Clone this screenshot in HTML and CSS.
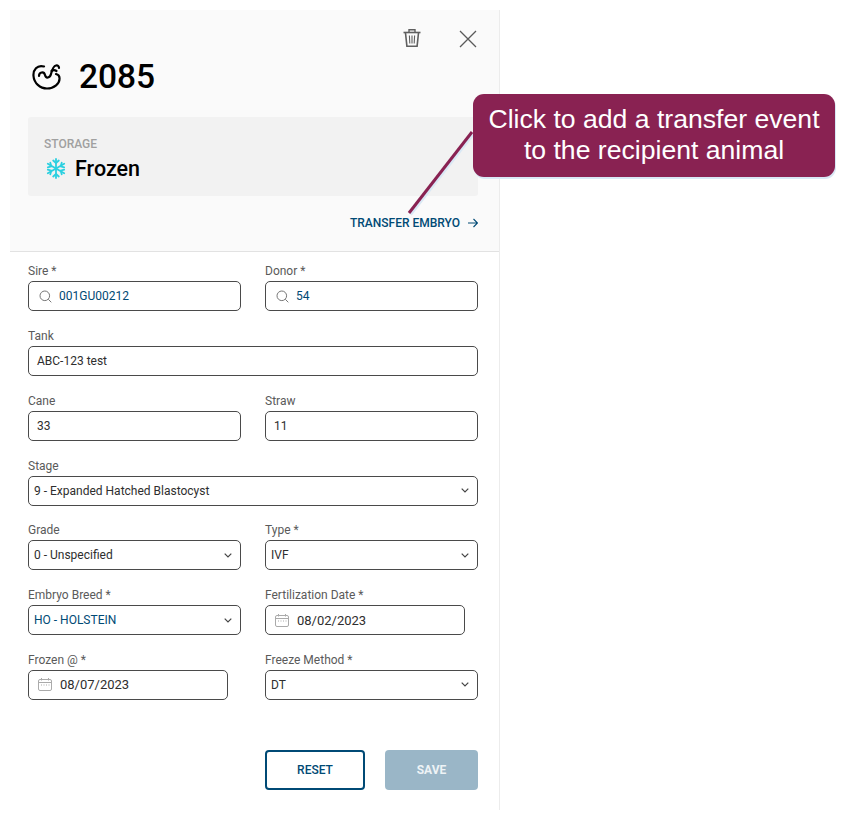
FILE: index.html
```html
<!DOCTYPE html>
<html lang="en">
<head>
    <meta charset="UTF-8">
    <meta name="viewport" content="width=device-width, initial-scale=1.0">
    <title>Embryo 2085</title>
    <link rel="stylesheet" href="styles.css">
</head>
<body>
    <div class="panel">
        <div class="panel-head">
            <div class="head-actions">
                <svg class="icon-trash" width="20" height="20" viewBox="0 0 20 20" fill="none" stroke="#5f5f5f">
                    <path d="M1.5 4.5h17" stroke-width="1.6"/>
                    <path d="M7 4V1.8h6V4" stroke-width="1.4"/>
                    <path d="M3.5 5l1.4 13.2h10.2L16.5 5" stroke-width="1.6"/>
                    <path d="M7.4 7.5l.4 8M10 7.5v8M12.6 7.5l-.4 8" stroke-width="1.1"/>
                </svg>
                <svg class="icon-close" width="18" height="18" viewBox="0 0 18 18" fill="none" stroke="#5a5a5a" stroke-width="1.3">
                    <path d="M1 1l16 16M17 1L1 17"/>
                </svg>
            </div>
            <div class="title-row">
                <svg class="icon-embryo" width="30" height="27" viewBox="0 0 30 27" fill="none" stroke="#000" stroke-width="2.2" stroke-linecap="round" stroke-linejoin="round">
                    <path d="M12 3.500C5 1.500 1 7 1.500 13 2 20 8 25.500 15 25.500c7 0 13-5 12.500-10.500 0-2-1.500-3.500-3.500-4"/>
                    <path d="M7 13c0-4 5-5 6-1 1 4 5 3 6-1 1-4 2-8 5-8.500 2-.3 3 1 3 2.500"/>
                    <path d="M19.500 8c1.500-1 3.500-1 5 0"/>
                </svg>
                <h1 class="title">2085</h1>
            </div>
            <div class="storage-card">
                <div class="storage-label">STORAGE</div>
                <div class="storage-value">
                    <svg class="icon-snow" width="20" height="21" viewBox="0 0 20 21" fill="none" stroke="#2bd0e0" stroke-width="1.8" stroke-linecap="round">
                        <path d="M10 1v19M1.800 5.750l16.400 9.500M18.200 5.750L1.800 15.250"/>
                        <path d="M7.200 2.500L10 5l2.800-2.500M7.200 18.500L10 16l2.800 2.500"/>
                        <path d="M1.800 9.300l3.500-1-1-3.600M15.700 16.300l-1-3.600 3.500-1"/>
                        <path d="M18.200 9.300l-3.500-1 1-3.600M4.300 16.300l1-3.600-3.500-1"/>
                    </svg>
                    <span>Frozen</span>
                </div>
            </div>
            <div class="transfer-row">
                <a class="transfer-link">TRANSFER EMBRYO</a>
                <svg width="10" height="10" viewBox="0 0 10 10" fill="none" stroke="#004a75" stroke-width="1.1">
                    <path d="M0 5h9.300M5.500 1l4 4-4 4"/>
                </svg>
            </div>
        </div>

        <div class="form">
            <div class="field">
                <label>Sire *</label>
                <div class="box with-icon">
                    <svg class="icon-search" width="13" height="13" viewBox="0 0 13 13" fill="none" stroke="#777" stroke-width="1"><circle cx="5.800" cy="5.800" r="4.800"/><path d="M9.300 9.300l3 3"/></svg>
                    <span class="val link">001GU00212</span>
                </div>
            </div>
            <div class="field">
                <label>Donor *</label>
                <div class="box with-icon">
                    <svg class="icon-search" width="13" height="13" viewBox="0 0 13 13" fill="none" stroke="#777" stroke-width="1"><circle cx="5.800" cy="5.800" r="4.800"/><path d="M9.300 9.300l3 3"/></svg>
                    <span class="val link">54</span>
                </div>
            </div>
            <div class="field wide">
                <label>Tank</label>
                <div class="box"><span class="val">ABC-123 test</span></div>
            </div>
            <div class="field">
                <label>Cane</label>
                <div class="box"><span class="val">33</span></div>
            </div>
            <div class="field">
                <label>Straw</label>
                <div class="box"><span class="val">11</span></div>
            </div>
            <div class="field wide">
                <label>Stage</label>
                <div class="box select"><span class="val">9 - Expanded Hatched Blastocyst</span><svg class="chev" width="8" height="5" viewBox="0 0 8 5" fill="none" stroke="#444" stroke-width="1.200"><path d="M.7.700L4 4 7.300.700"/></svg></div>
            </div>
            <div class="field">
                <label>Grade</label>
                <div class="box select"><span class="val">0 - Unspecified</span><svg class="chev" width="8" height="5" viewBox="0 0 8 5" fill="none" stroke="#444" stroke-width="1.200"><path d="M.7.700L4 4 7.300.700"/></svg></div>
            </div>
            <div class="field">
                <label>Type *</label>
                <div class="box select"><span class="val">IVF</span><svg class="chev" width="8" height="5" viewBox="0 0 8 5" fill="none" stroke="#444" stroke-width="1.200"><path d="M.7.700L4 4 7.300.700"/></svg></div>
            </div>
            <div class="field">
                <label>Embryo Breed *</label>
                <div class="box select"><span class="val link">HO - HOLSTEIN</span><svg class="chev" width="8" height="5" viewBox="0 0 8 5" fill="none" stroke="#444" stroke-width="1.200"><path d="M.7.700L4 4 7.300.700"/></svg></div>
            </div>
            <div class="field">
                <label>Fertilization Date *</label>
                <div class="box date">
                    <svg class="icon-cal" width="14" height="13" viewBox="0 0 14 13" fill="none" stroke="#aaa" stroke-width="1"><rect x=".5" y="1.500" width="13" height="11" rx="1.500"/><path d="M.5 4.500h13M3.500 0v2.500M10.500 0v2.500"/><path d="M3 7h1M5.500 7h1M8 7h1M10.500 7h1"/></svg>
                    <span class="val">08/02/2023</span>
                </div>
            </div>
            <div class="field">
                <label>Frozen @ *</label>
                <div class="box date">
                    <svg class="icon-cal" width="14" height="13" viewBox="0 0 14 13" fill="none" stroke="#aaa" stroke-width="1"><rect x=".5" y="1.500" width="13" height="11" rx="1.500"/><path d="M.5 4.500h13M3.500 0v2.500M10.500 0v2.500"/><path d="M3 7h1M5.500 7h1M8 7h1M10.500 7h1"/></svg>
                    <span class="val">08/07/2023</span>
                </div>
            </div>
            <div class="field">
                <label>Freeze Method *</label>
                <div class="box select"><span class="val">DT</span><svg class="chev" width="8" height="5" viewBox="0 0 8 5" fill="none" stroke="#444" stroke-width="1.200"><path d="M.7.700L4 4 7.300.700"/></svg></div>
            </div>
        </div>

        <div class="form-buttons">
            <button class="btn btn-reset">RESET</button>
            <button class="btn btn-save">SAVE</button>
        </div>
    </div>

    <!-- callout over the panel -->
    <svg class="callout-line" width="70" height="90" viewBox="0 0 70 90" fill="none">
        <path d="M66 2L3 83" stroke="#d9e8f5" stroke-width="3" transform="translate(1.500 1.500)"/>
        <path d="M66 2L3 83" stroke="#892252" stroke-width="3"/>
    </svg>
    <div class="callout">Click to add a transfer event<br>to the recipient animal</div>
</body>
</html>
```

FILE: styles.css
```css
* {
    box-sizing: border-box;
}

body {
    margin: 0;
    padding: 10px;
    background: #fff;
    color: #2e2e2e;
    font-family: Roboto, sans-serif;
}

.panel {
    width: 490px;
    height: 800px;
    border-right: 1px solid #ececec;
}

.panel-head {
    height: 242px;
    padding: 18px 21px 0 18px;
    background: #fafafa;
    border-bottom: 1px solid #e2e2e2;
}

.head-actions {
    display: flex;
    justify-content: flex-end;
    gap: 37px;
    height: 20px;
    margin-right: 1px;
}

.icon-close {
    margin-top: 2px;
}

.title-row {
    display: flex;
    align-items: center;
    gap: 17px;
    height: 36px;
    margin-top: 10px;
    padding-left: 4px;
}

.title {
    margin: 0;
    font-size: 33.5px;
    font-weight: 500;
    line-height: 35px;
    color: #000;
}

.storage-card {
    height: 79px;
    margin-top: 23px;
    padding: 20px 16px 0;
    background: #f2f2f2;
    border-radius: 3px;
}

.storage-label {
    font-size: 12px;
    font-weight: 500;
    line-height: 14px;
    color: #a0a0a0;
}

.storage-value {
    display: flex;
    align-items: center;
    gap: 9px;
    margin-top: 5px;
    padding-left: 2px;
    font-size: 21.5px;
    font-weight: 500;
    line-height: 26px;
    color: #000;
}

.icon-snow {
    margin-top: -2px;
}

.transfer-row {
    display: flex;
    justify-content: flex-end;
    align-items: center;
    gap: 8px;
    margin-top: 19px;
    font-size: 12px;
    font-weight: 500;
    line-height: 16px;
    color: #004a75;
}

.form {
    display: grid;
    grid-template-columns: 213px 213px;
    column-gap: 24px;
    row-gap: 17.8px;
    padding: 12.2px 21px 0 18px;
}

.field label {
    display: block;
    height: 17px;
    font-size: 12px;
    line-height: 15px;
    color: #5a5a5a;
}

.wide {
    grid-column: 1 / 3;
}

.box {
    display: flex;
    align-items: center;
    height: 30px;
    padding: 0 8px;
    background: #fff;
    border: 1px solid #4a4a4a;
    border-radius: 5px;
    font-size: 12px;
}

.with-icon {
    gap: 7px;
    padding-left: 10px;
}

.select {
    justify-content: space-between;
    padding: 0 8px 0 5px;
}

.date {
    width: 200px;
    gap: 8px;
    padding-left: 9px;
    font-size: 13px;
}

.link {
    color: #004a75;
}

.form-buttons {
    display: flex;
    justify-content: flex-end;
    gap: 20px;
    margin-top: 50px;
    padding-right: 21px;
}

.btn {
    height: 40px;
    border-radius: 4px;
    font-family: Roboto, sans-serif;
    font-size: 12px;
    font-weight: 500;
}

.btn-reset {
    width: 100px;
    background: #fff;
    border: 2px solid #004a75;
    color: #004a75;
}

.btn-save {
    width: 93px;
    background: #9ab6c7;
    border: none;
    color: #eef3f6;
    font-weight: 700;
}

.callout {
    position: absolute;
    left: 473px;
    top: 94px;
    width: 362px;
    height: 83px;
    padding-top: 10px;
    background: #892252;
    border-radius: 11px;
    box-shadow: 1px 2px 0 #d9e8f5;
    color: #fff;
    font-family: "Liberation Sans", sans-serif;
    font-size: 26.6px;
    line-height: 31px;
    text-align: center;
}

.callout-line {
    position: absolute;
    left: 406px;
    top: 130px;
}
```
